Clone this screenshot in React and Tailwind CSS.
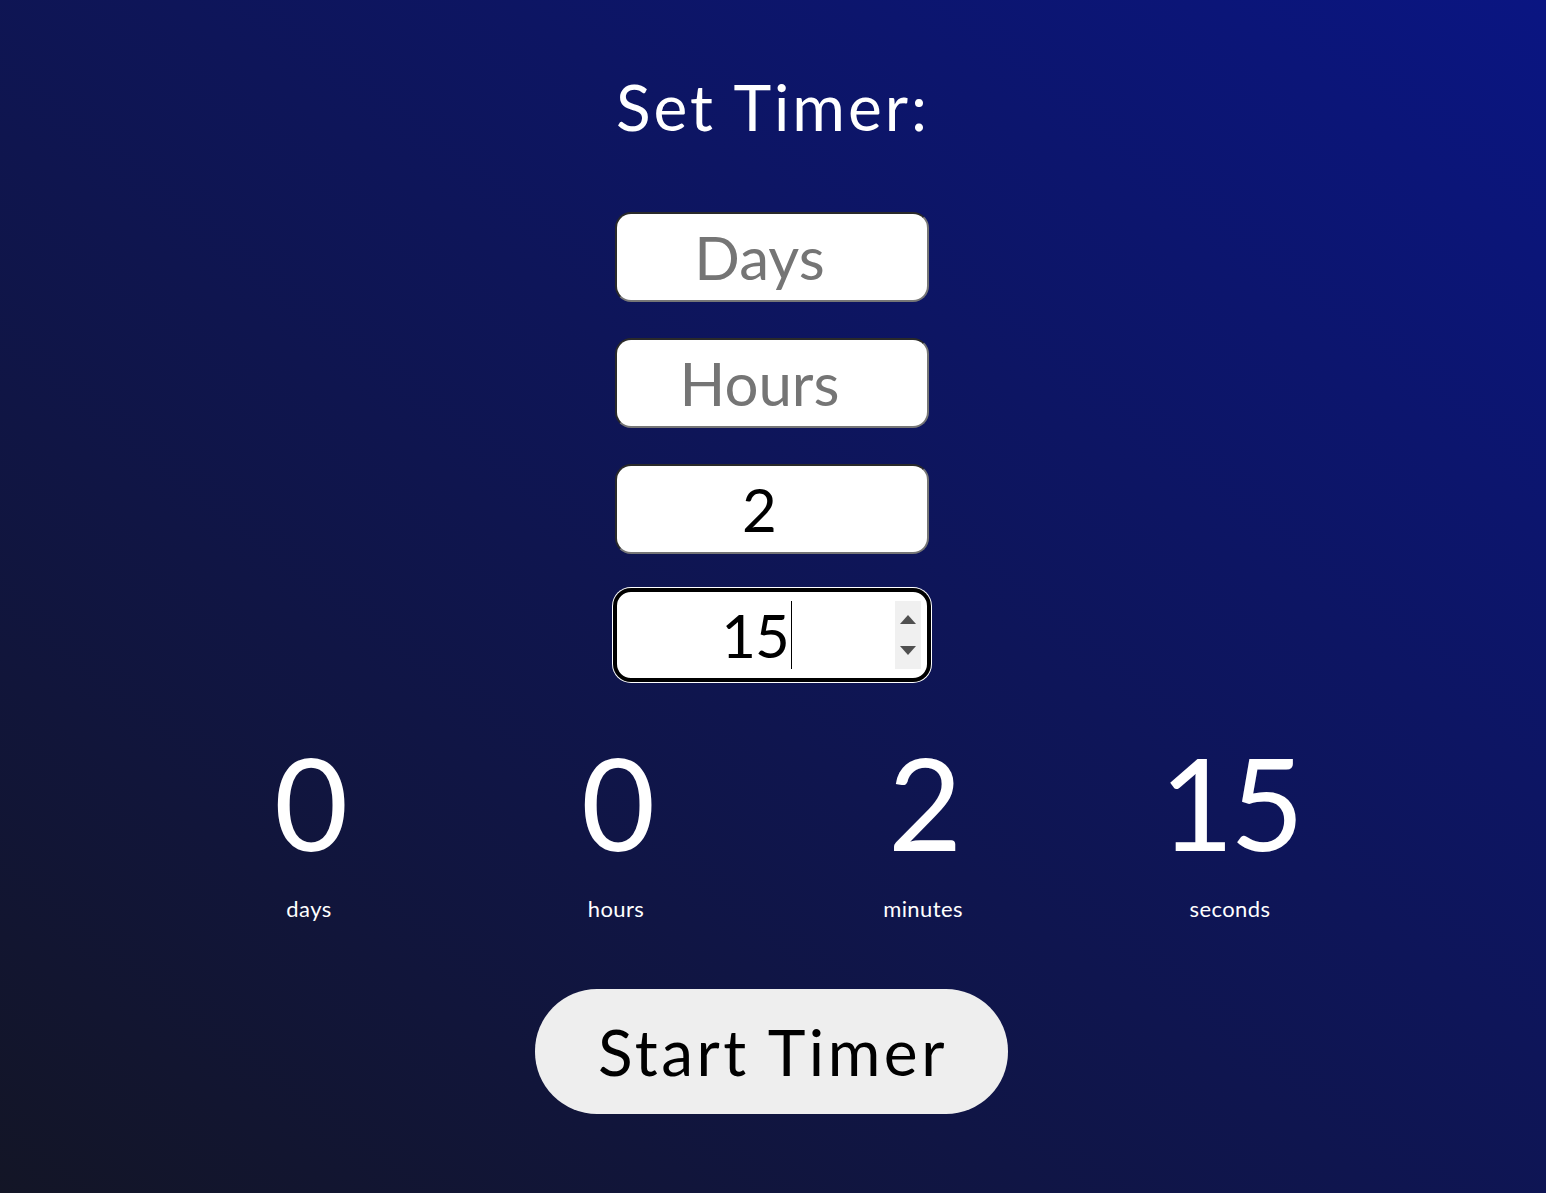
import { useState } from 'react';

const units = [
  { value: 0, label: 'days' },
  { value: 0, label: 'hours' },
  { value: 2, label: 'minutes' },
  { value: 15, label: 'seconds' },
];

const inputBase =
  'h-[90px] w-[314px] rounded-[16px] bg-white border-2 border-t-[#2a2a2a] border-l-[#2a2a2a] border-b-[#767676] border-r-[#767676] pl-[2px] pr-[26px] text-center text-[60px] leading-none text-black placeholder:text-[#757575] outline-none';

function Spinner() {
  return (
    <div className="absolute right-[6px] top-[9px] flex h-[68px] w-[26px] flex-col items-center justify-between bg-[#f0f0f0] py-[14px]">
      <svg width="16" height="9" viewBox="0 0 16 9">
        <path d="M0 9 L8 0 L16 9 Z" fill="#505050" />
      </svg>
      <svg width="16" height="9" viewBox="0 0 16 9">
        <path d="M0 0 L8 9 L16 0 Z" fill="#505050" />
      </svg>
    </div>
  );
}

export default function App() {
  const [days, setDays] = useState('');
  const [hours, setHours] = useState('');
  const [minutes, setMinutes] = useState('2');

  return (
    <div
      className="flex min-h-screen w-full flex-col items-center bg-[linear-gradient(to_top_right,#131526,#0a1582)] pr-[3px] text-white"
      style={{ fontFamily: 'Lato, "Noto Sans", sans-serif' }}
    >
      <h1 className="mt-[75px] ml-[3px] text-[64px] leading-none font-normal tracking-[3px]">Set Timer:</h1>

      <div className="mt-[73px] flex flex-col gap-[36px]">
        <input className={inputBase} placeholder="Days" value={days} onChange={(e) => setDays(e.target.value)} />
        <input className={inputBase} placeholder="Hours" value={hours} onChange={(e) => setHours(e.target.value)} />
        <input className={inputBase} value={minutes} onChange={(e) => setMinutes(e.target.value)} />
        <div className="relative flex h-[90px] w-[314px] items-center justify-center rounded-[16px] border-2 border-black bg-white pr-[30px] text-[60px] leading-none text-black shadow-[0_0_0_2px_#000,0_0_0_3px_#fff]">
          <span className="tracking-[-1px]">15</span>
          <span className="ml-[2px] h-[68px] w-px bg-black" />
          <Spinner />
        </div>
      </div>

      <div className="mt-[58px] mr-[4px] flex">
        {units.map((u) => (
          <div key={u.label} className="flex w-[307px] flex-col items-center">
            <span className="text-[128px] leading-none tracking-[-4px]">{u.value}</span>
            <span className="mt-[32px] text-[22px] leading-none tracking-[0.4px]">{u.label}</span>
          </div>
        ))}
      </div>

      <button className="mt-[69px] mb-[78px] h-[125px] w-[473px] rounded-[62px] bg-[#eeeeee] pl-[3px] text-[64px] leading-none tracking-[3.5px] text-black">
        Start Timer
      </button>
    </div>
  );
}
